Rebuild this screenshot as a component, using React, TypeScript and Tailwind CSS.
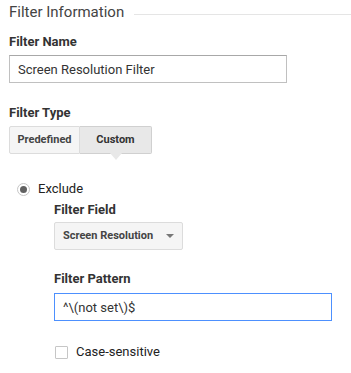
import { useState } from 'react';

export default function App() {
  const [caseSensitive, setCaseSensitive] = useState(false);

  return (
    <div className="w-[351px] h-[373px] bg-white pl-[9px] pt-[2px] font-['Roboto',sans-serif] text-[#333] overflow-hidden">
      {/* Section heading */}
      <div className="flex items-start">
        <h2 className="text-[15px] leading-[20px] text-[#444]">Filter Information</h2>
        <div className="flex-1 h-px bg-[#e5e5e5] mt-[12px] ml-[10px]" />
      </div>

      {/* Filter name */}
      <label className="block mt-[12px] text-[13px] leading-[16px] font-bold text-[#333]">Filter Name</label>
      <input
        defaultValue="Screen Resolution Filter"
        className="block mt-[5px] w-[278px] h-[28px] border border-[#c0c0c0] border-t-[#a8a8a8] px-[8px] text-[13px] text-[#333] outline-none"
      />

      {/* Filter type */}
      <label className="block mt-[22px] text-[13px] leading-[16px] font-bold text-[#333]">Filter Type</label>
      <div className="mt-[5px] flex">
        <button className="h-[28px] w-[71px] border border-[#dcdcdc] rounded-l-[2px] bg-[#f5f5f5] text-[11px] font-bold text-[#444]">
          Predefined
        </button>
        <button className="relative h-[28px] w-[72px] border border-l-0 border-[#d0d0d0] rounded-r-[2px] bg-[#e8e8e8] text-[11px] font-bold text-[#333]">
          Custom
          <span className="absolute left-1/2 -translate-x-1/2 top-full w-0 h-0 border-l-[6px] border-r-[6px] border-t-[7px] border-l-transparent border-r-transparent border-t-[#e8e8e8]" />
        </button>
      </div>

      {/* Exclude */}
      <div className="mt-[26px] ml-[8px] flex items-center gap-[8px]">
        <span className="w-[13px] h-[13px] rounded-full border border-[#c6c6c6] bg-white flex items-center justify-center">
          <span className="w-[7px] h-[7px] rounded-full bg-[#616161]" />
        </span>
        <span className="text-[13px] leading-[18px] text-[#222]">Exclude</span>
      </div>

      <div className="ml-[45px]">
        <label className="block mt-[4px] text-[13px] leading-[16px] font-bold text-[#333]">Filter Field</label>
        <button className="mt-[4px] flex items-center w-[129px] h-[28px] border border-[#dcdcdc] rounded-[2px] bg-[#f5f5f5] pl-[8px] pr-[8px] text-[11px] font-bold text-[#444]">
          <span className="flex-1 text-left">Screen Resolution</span>
          <span className="w-0 h-0 border-l-[4px] border-r-[4px] border-t-[4px] border-l-transparent border-r-transparent border-t-[#777]" />
        </button>

        <label className="block mt-[21px] text-[13px] leading-[16px] font-bold text-[#333]">Filter Pattern</label>
        <input
          defaultValue="^\(not set\)$"
          className="block mt-[6px] w-[278px] h-[28px] border border-[#4d90fe] px-[8px] text-[13px] text-[#333] outline-none"
        />

        <label className="mt-[22px] ml-[1px] flex items-center gap-[8px] cursor-pointer">
          <input
            type="checkbox"
            checked={caseSensitive}
            onChange={(e) => setCaseSensitive(e.target.checked)}
            className="appearance-none w-[13px] h-[13px] border border-[#c6c6c6] rounded-[1px] bg-white"
          />
          <span className="text-[13px] leading-[18px] text-[#222]">Case-sensitive</span>
        </label>
      </div>
    </div>
  );
}
